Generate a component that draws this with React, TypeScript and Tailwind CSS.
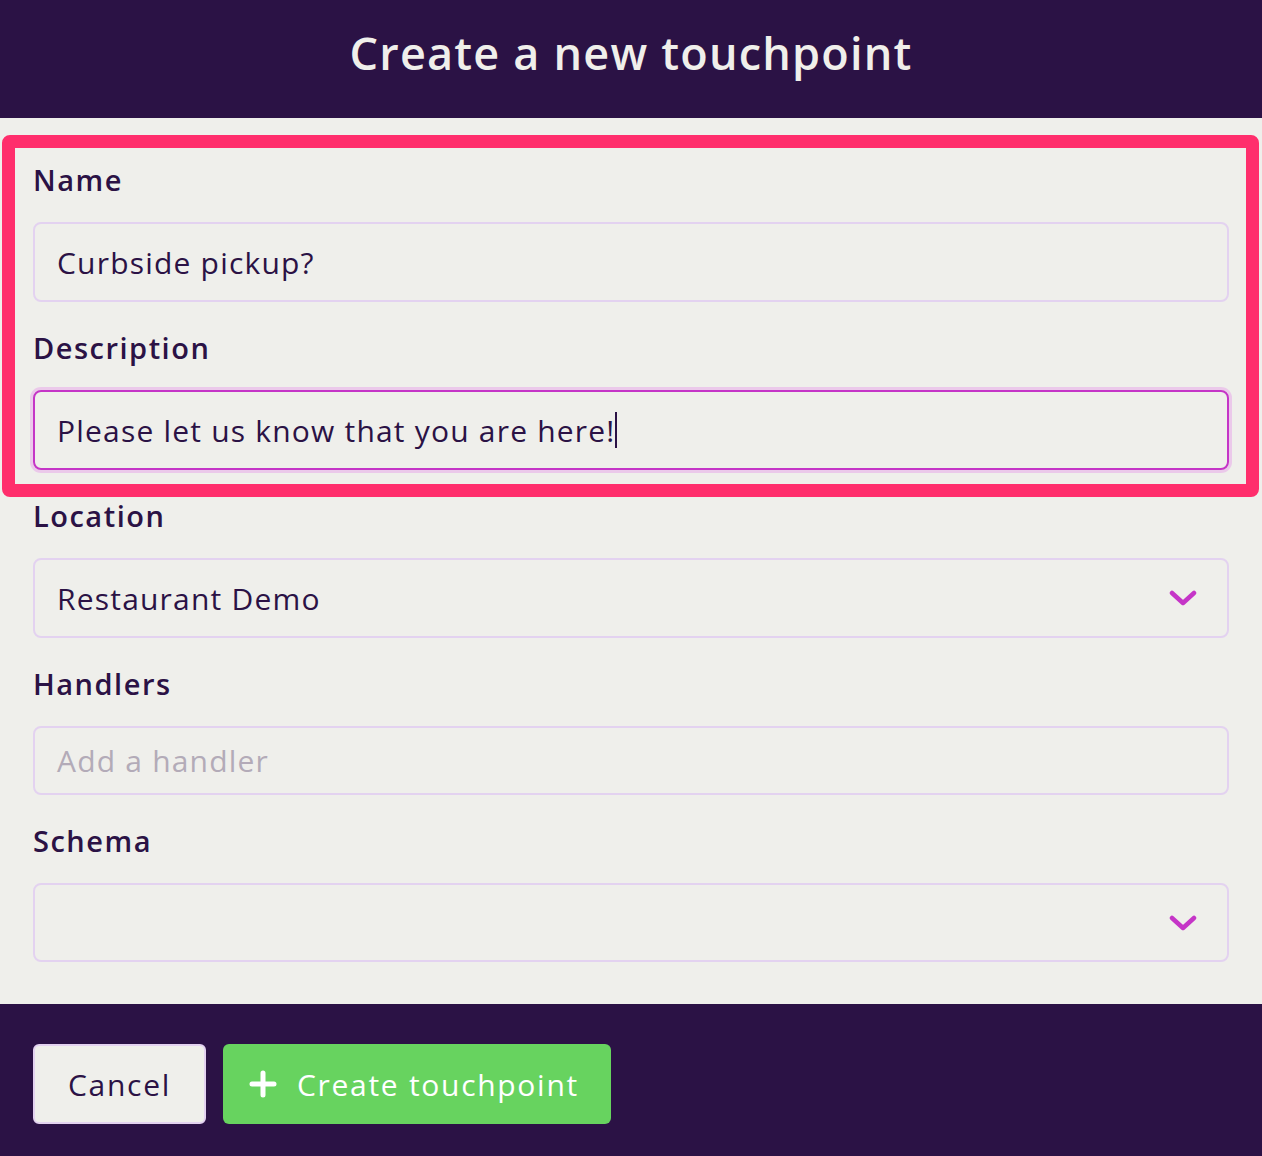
import React from "react";

const font = { fontFamily: "'Open Sans', 'Noto Sans', sans-serif" };

function Chevron() {
  return (
    <svg width="28" height="18" viewBox="0 0 28 18" fill="none">
      <path d="M3 4 L14 14 L25 4" stroke="#c535c7" strokeWidth="4.5" strokeLinecap="round" strokeLinejoin="round" />
    </svg>
  );
}

function Label({ children }: { children: React.ReactNode }) {
  return <div className="text-[29px] leading-[36px] font-semibold tracking-[1.5px] text-[#2b1245] mb-[24px]">{children}</div>;
}

export default function App() {
  return (
    <div className="w-[1262px] h-[1156px] flex flex-col bg-[#efefeb] overflow-hidden" style={font}>
      <div className="h-[118px] bg-[#2b1245] flex items-center justify-center">
        <h1 className="text-[45px] leading-none font-semibold text-[#f0efeb] tracking-[1.2px] -mt-[14px]">Create a new touchpoint</h1>
      </div>
      <div className="relative flex-1 px-[33px] pt-[44px] pb-[41px] flex flex-col">
        <div className="absolute left-[2px] top-[17px] w-[1257px] h-[362px] border-[13px] border-[#ff2e6c] rounded-[8px] pointer-events-none" />
        <Label>Name</Label>
        <div className="h-[80px] border-2 border-[#e3d2f0] rounded-[8px] flex items-center px-[22px] text-[30px] tracking-[1.2px] text-[#2b1245]">
          Curbside pickup?
        </div>
        <div className="h-[28px]" />
        <Label>Description</Label>
        <div className="h-[80px] border-2 border-[#c535c7] rounded-[8px] ring-[3px] ring-[#ebc9ea] flex items-center px-[22px] text-[30px] tracking-[1.2px] text-[#2b1245]">
          Please let us know that you are here!<span className="inline-block w-[2px] h-[36px] bg-[#2b1245]" />
        </div>
        <div className="h-[28px]" />
        <Label>Location</Label>
        <div className="h-[80px] border-2 border-[#e3d2f0] rounded-[8px] flex items-center justify-between pl-[22px] pr-[30px] text-[30px] tracking-[1.2px] text-[#2b1245]">
          <span>Restaurant Demo</span>
          <Chevron />
        </div>
        <div className="h-[28px]" />
        <Label>Handlers</Label>
        <div className="h-[69px] border-2 border-[#e3d2f0] rounded-[8px] flex items-center px-[22px] text-[30px] tracking-[1.2px] text-[#b3abb8]">
          Add a handler
        </div>
        <div className="h-[28px]" />
        <Label>Schema</Label>
        <div className="h-[79px] border-2 border-[#e3d2f0] rounded-[8px] flex items-center justify-end pr-[30px]">
          <Chevron />
        </div>
      </div>
      <div className="h-[152px] bg-[#2b1245] px-[33px] pt-[40px] flex gap-[17px] items-start">
        <button className="h-[80px] w-[173px] bg-[#efefeb] border-2 border-[#e3d2f0] rounded-[6px] text-[30px] tracking-[1.7px] text-[#2b1245]">
          Cancel
        </button>
        <button className="h-[80px] w-[388px] bg-[#67d35f] rounded-[6px] text-[30px] tracking-[1.7px] text-white flex items-center pl-[26px] gap-[20px]">
          <svg width="28" height="28" viewBox="0 0 28 28">
            <path d="M14 3 V25 M3 14 H25" stroke="white" strokeWidth="5" strokeLinecap="round" />
          </svg>
          <span>Create touchpoint</span>
        </button>
      </div>
    </div>
  );
}
